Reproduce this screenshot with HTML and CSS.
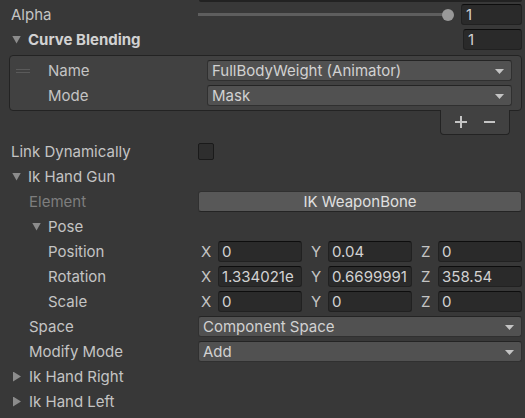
FILE: index.html
```html
<!doctype html>
<html lang="en">
  <head>
    <meta charset="UTF-8" />
    <meta name="viewport" content="width=device-width, initial-scale=1.0" />
    <title>Inspector</title>
    <link rel="stylesheet" href="styles.css">
  </head>
  <body>
    <div class="inspector">
      <div class="cut-field"></div>

      <div class="row">
        <span class="label">Alpha</span>
        <div class="slider">
          <div class="track"></div>
          <div class="thumb"></div>
        </div>
        <div class="field num">1</div>
      </div>

      <div class="row">
        <span class="label fold open bold">Curve Blending</span>
        <div class="grow"></div>
        <div class="field num small">1</div>
      </div>

      <div class="list">
        <div class="list-row">
          <span class="handle"></span>
          <span class="label">Name</span>
          <div class="dropdown">FullBodyWeight (Animator)</div>
        </div>
        <div class="list-row">
          <span class="handle hidden"></span>
          <span class="label">Mode</span>
          <div class="dropdown">Mask</div>
        </div>
      </div>
      <div class="list-footer">
        <svg width="12" height="12" viewBox="0 0 12 12"><path d="M6 0v12M0 6h12" stroke="#c4c4c4" stroke-width="2"/></svg>
        <svg width="11" height="12" viewBox="0 0 11 12"><path d="M0 6h11" stroke="#c4c4c4" stroke-width="2"/></svg>
      </div>

      <div class="row gap-top">
        <span class="label">Link Dynamically</span>
        <div class="checkbox"></div>
      </div>

      <div class="row">
        <span class="label fold open">Ik Hand Gun</span>
      </div>
      <div class="row">
        <span class="label indent-1 disabled">Element</span>
        <div class="button">IK WeaponBone</div>
      </div>
      <div class="row">
        <span class="label fold open indent-fold-1">Pose</span>
      </div>
      <div class="row">
        <span class="label indent-2">Position</span>
        <div class="vector">
          <div class="axis"><span>X</span><div class="field">0</div></div>
          <div class="axis"><span>Y</span><div class="field">0.04</div></div>
          <div class="axis"><span>Z</span><div class="field">0</div></div>
        </div>
      </div>
      <div class="row">
        <span class="label indent-2">Rotation</span>
        <div class="vector">
          <div class="axis"><span>X</span><div class="field">1.334021e</div></div>
          <div class="axis"><span>Y</span><div class="field">0.6699991</div></div>
          <div class="axis"><span>Z</span><div class="field">358.54</div></div>
        </div>
      </div>
      <div class="row">
        <span class="label indent-2">Scale</span>
        <div class="vector">
          <div class="axis"><span>X</span><div class="field">0</div></div>
          <div class="axis"><span>Y</span><div class="field">0</div></div>
          <div class="axis"><span>Z</span><div class="field">0</div></div>
        </div>
      </div>
      <div class="row">
        <span class="label indent-1">Space</span>
        <div class="dropdown">Component Space</div>
      </div>
      <div class="row">
        <span class="label indent-1">Modify Mode</span>
        <div class="dropdown">Add</div>
      </div>

      <div class="row">
        <span class="label fold">Ik Hand Right</span>
      </div>
      <div class="row">
        <span class="label fold">Ik Hand Left</span>
      </div>
    </div>
  </body>
</html>
```

FILE: styles.css
```css
* {
  margin: 0;
  padding: 0;
  box-sizing: border-box;
}

body {
  background: #383838;
  color: #c4c4c4;
  font-family: Inter, "Noto Sans", sans-serif;
  font-size: 15px;
  overflow: hidden;
}

.inspector {
  width: 525px;
}

/* bottom edge of the field scrolled out above */
.cut-field {
  height: 2px;
  margin: 0 3px 0 199px;
  background: #222;
  border-radius: 0 0 3px 3px;
}

.row {
  display: flex;
  align-items: center;
  height: 25px;
  padding: 0 3px 0 11px;
}

.row.gap-top {
  margin-top: 4px;
}

.label {
  flex: 0 0 187px;
  white-space: nowrap;
}

.label.bold {
  font-weight: 700;
  color: #d2d2d2;
}

.label.disabled {
  color: #7e7e7e;
}

.indent-1 {
  padding-left: 18px;
}

.indent-2 {
  padding-left: 37px;
}

/* foldout arrows */
.fold {
  display: flex;
  align-items: center;
}

.fold::before {
  content: '';
  width: 8px;
  height: 10px;
  margin: 0 8px 0 2px;
  background: #8c8c8c;
  clip-path: polygon(0 0, 100% 50%, 0 100%);
}

.fold.open::before {
  width: 9px;
  height: 8px;
  margin: 0 7px 0 1px;
  clip-path: polygon(0 0, 100% 0, 50% 100%);
}

.fold.indent-fold-1::before {
  margin-left: 21px;
}

.grow {
  flex: 1;
}

/* slider */
.slider {
  flex: 1;
  display: flex;
  align-items: center;
  margin-right: 7px;
}

.track {
  flex: 1;
  height: 3px;
  background: #5e5e5e;
}

.thumb {
  width: 12px;
  height: 12px;
  margin-left: -4px;
  border-radius: 50%;
  background: #999;
}

/* text fields */
.field {
  height: 21px;
  display: flex;
  align-items: center;
  padding: 0 4px;
  background: #2a2a2a;
  border: 1px solid #212121;
  border-top-color: #0d0d0d;
  border-radius: 3px;
  color: #d2d2d2;
  white-space: nowrap;
  overflow: hidden;
}

.field.num {
  width: 61px;
}

.field.num.small {
  width: 59px;
}

/* reorderable list */
.list {
  margin: 3px 3px 0 9px;
  padding: 2px 0;
  background: #414141;
  border: 1px solid #232323;
  border-radius: 4px;
}

.list-row {
  display: flex;
  align-items: center;
  height: 25px;
  padding: 0 9px 0 6px;
}

.list-row .label {
  flex: 0 0 159px;
}

.handle {
  width: 14px;
  height: 4px;
  margin-right: 18px;
  border-top: 1px solid #5a5a5a;
  border-bottom: 1px solid #5a5a5a;
}

.handle.hidden {
  visibility: hidden;
}

.list-footer {
  display: flex;
  align-items: center;
  justify-content: space-around;
  width: 70px;
  height: 25px;
  margin: -1px 15px 0 auto;
  padding: 0 6px 0 6px;
  background: #414141;
  border: 1px solid #232323;
  border-top: none;
  border-radius: 0 0 4px 4px;
}

/* popups and buttons */
.dropdown {
  flex: 1;
  height: 21px;
  display: flex;
  align-items: center;
  padding: 0 22px 0 4px;
  position: relative;
  background: #515151;
  border: 1px solid #303030;
  border-top-color: #242424;
  border-radius: 3px;
  color: #d2d2d2;
  white-space: nowrap;
}

.dropdown::after {
  content: '';
  position: absolute;
  right: 7px;
  top: 8px;
  width: 9px;
  height: 5px;
  background: #c4c4c4;
  clip-path: polygon(0 0, 100% 0, 50% 100%);
}

.button {
  flex: 1;
  height: 21px;
  display: flex;
  align-items: center;
  justify-content: center;
  background: #585858;
  border: 1px solid #303030;
  border-bottom-color: #242424;
  border-radius: 3px;
  color: #e0e0e0;
}

.checkbox {
  width: 16px;
  height: 17px;
  background: #2e2e2e;
  border: 1px solid #1a1a1a;
  border-radius: 2px;
}

/* vector3 fields */
.vector {
  flex: 1;
  display: flex;
  gap: 6px;
}

.axis {
  flex: 1;
  display: flex;
  align-items: center;
}

.axis span {
  flex: 0 0 20px;
  padding-left: 3px;
}

.axis .field {
  flex: 1;
  padding-left: 3px;
}
```
